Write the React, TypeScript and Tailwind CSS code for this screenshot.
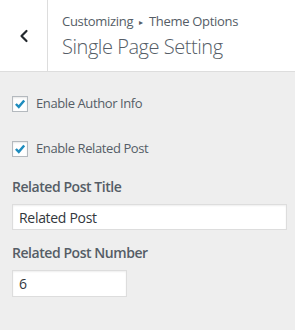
import { ChevronLeft } from 'lucide-react';

function CheckRow({ label }: { label: string }) {
  return (
    <div className="flex items-center h-4">
      <span className="w-4 h-4 border border-[#b4b9be] bg-white shadow-[inset_0_1px_2px_rgba(0,0,0,0.1)] flex items-center justify-center">
        <svg viewBox="0 0 16 16" className="w-[14px] h-[14px]">
          <path d="M3.3 8 L6.6 11.3 L12.8 4" fill="none" stroke="#1e8cbe" strokeWidth="2.8" />
        </svg>
      </span>
      <span className="ml-2 text-[13px] tracking-[-0.4px] text-[#555d66]">{label}</span>
    </div>
  );
}

export default function App() {
  return (
    <div
      className="w-[295px] h-[330px] bg-[#eeeeee] overflow-hidden"
      style={{ fontFamily: '"Open Sans", "Noto Sans", sans-serif' }}
    >
      {/* Header */}
      <div className="flex h-[72px] bg-white border-b border-[#dddddd]">
        <div className="w-[48px] border-r border-[#dddddd] flex items-center justify-center">
          <ChevronLeft className="w-5 h-5 text-[#23282d]" strokeWidth={2.6} />
        </div>
        <div className="pl-[14px] pt-[11px]">
          <div className="text-[13px] leading-[20px] tracking-[-0.3px] text-[#555d66]">
            Customizing<span className="text-[8px] relative -top-[1px] mx-[6px]">▸</span>Theme Options
          </div>
          <div className="text-[20px] leading-[28px] tracking-[-0.45px] font-light text-[#555d66]">Single Page Setting</div>
        </div>
      </div>

      {/* Settings */}
      <div className="pt-[24px] pl-3 pr-2">
        <CheckRow label="Enable Author Info" />
        <div className="mt-[29px]">
          <CheckRow label="Enable Related Post" />
        </div>

        <div className="mt-[20px] text-[14px] leading-[20px] tracking-[-0.45px] font-semibold text-[#555d66]">Related Post Title</div>
        <div className="mt-[7px] h-[26px] bg-white border border-[#dddddd] shadow-[inset_0_1px_2px_rgba(0,0,0,0.07)] flex items-center px-[6px] text-[14px] tracking-[-0.3px] text-[#32373c]">
          Related Post
        </div>

        <div className="mt-[13px] text-[14px] leading-[20px] tracking-[-0.45px] font-semibold text-[#555d66]">Related Post Number</div>
        <div className="mt-[7px] w-[115px] h-[27px] bg-white border border-[#dddddd] shadow-[inset_0_1px_2px_rgba(0,0,0,0.07)] flex items-center px-[6px] text-[14px] text-[#32373c]">
          6
        </div>
      </div>
    </div>
  );
}
